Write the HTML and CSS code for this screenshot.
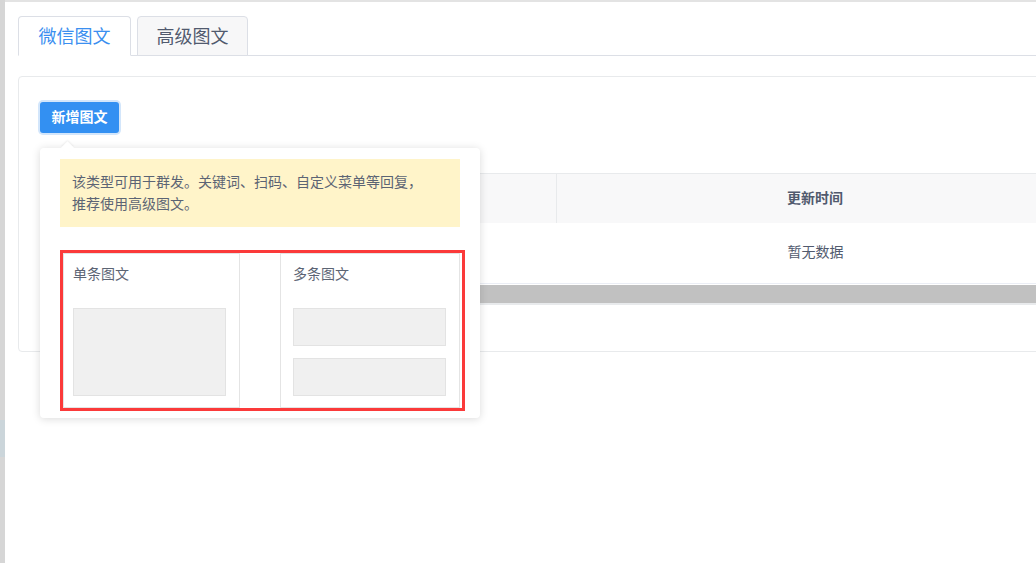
FILE: index.html
```html
<!DOCTYPE html>
<html lang="zh-CN">
<head>
<meta charset="utf-8">
<title>微信图文</title>
<link rel="stylesheet" href="styles.css">
</head>
<body>
<div class="strip"><div class="strip-mark"></div></div>
<div class="main">
  <div class="tabs">
    <div class="tab active">微信图文</div>
    <div class="tab">高级图文</div>
  </div>
  <div class="card">
    <div class="btn-wrap">
      <button class="btn">新增图文</button>
      <div class="popover">
        <div class="notice">该类型可用于群发。关键词、扫码、自定义菜单等回复，<br>推荐使用高级图文。</div>
        <div class="choices">
          <div class="choice single">
            <div class="choice-title">单条图文</div>
            <div class="ph ph-big"></div>
          </div>
          <div class="choice multi">
            <div class="choice-title">多条图文</div>
            <div class="ph ph-small"></div>
            <div class="ph ph-small"></div>
          </div>
        </div>
      </div>
    </div>
    <div class="table">
      <div class="thead">
        <div class="th"></div>
        <div class="th">更新时间</div>
        <div class="th"></div>
      </div>
      <div class="tbody">暂无数据</div>
      <div class="scrollbar"></div>
    </div>
  </div>
</div>
</body>
</html>
```
FILE: styles.css
```css
html, body {
  margin: 0;
  padding: 0;
  height: 563px;
  overflow: hidden;
  background: #fff;
}
body {
  display: flex;
  font-family: "Noto Sans CJK SC", "Noto Sans", sans-serif;
  font-size: 14px;
  color: #515a6e;
}
.strip {
  width: 5px;
  flex: none;
  background: #d6d6d6;
  height: 563px;
  padding-top: 420px;
  box-sizing: border-box;
}
.strip-mark {
  height: 37px;
  background: #cbd5da;
}
.main {
  flex: 1;
  min-width: 0;
  overflow: hidden;
  border-top: 2px solid #e3e3e3;
  padding: 14px 0 0 13px;
  box-sizing: border-box;
  height: 563px;
}
.tabs {
  display: flex;
  align-items: flex-end;
  border-bottom: 1px solid #dcdfe6;
  height: 39px;
}
.tab {
  box-sizing: border-box;
  height: 40px;
  margin-bottom: -1px;
  border: 1px solid #dcdfe6;
  border-radius: 4px 4px 0 0;
  background: #f7f7f8;
  color: #515a6e;
  font-size: 18px;
  line-height: 36px;
  text-align: center;
  width: 111px;
  margin-right: 6px;
}
.tab.active {
  width: 113px;
  background: #fff;
  border-bottom-color: #fff;
  color: #3b8ff0;
}
.card {
  width: 1600px;
  margin-top: 20px;
  border: 1px solid #e8eaec;
  border-radius: 4px;
  padding: 25px 21px 46px;
}
.btn-wrap {
  position: relative;
  width: 79px;
  height: 31px;
}
.btn {
  display: block;
  width: 79px;
  height: 31px;
  padding: 0 0 3px;
  border: none;
  border-radius: 3px;
  background: #3390f2;
  color: #fff;
  font-family: "Noto Sans CJK SC", "Noto Sans", sans-serif;
  font-size: 14px;
  font-weight: bold;
  box-shadow: 0 0 0 2px #d3e6fb;
}
.popover {
  position: absolute;
  left: 0;
  top: 46px;
  z-index: 5;
  width: 440px;
  height: 270px;
  box-sizing: border-box;
  padding: 11px 20px 7px;
  background: #fff;
  border-radius: 4px;
  box-shadow: 0 1px 8px rgba(0, 0, 0, 0.15);
}
.popover::before {
  content: "";
  position: absolute;
  left: 23px;
  top: -5px;
  width: 9px;
  height: 9px;
  background: #fff;
  transform: rotate(45deg);
  box-shadow: -1px -1px 2px rgba(0, 0, 0, 0.06);
}
.notice {
  position: relative;
  height: 68px;
  box-sizing: border-box;
  padding: 11px 12px 13px;
  background: #fff4c9;
  color: #5c6474;
  font-size: 14px;
  line-height: 22px;
}
.choices {
  margin-top: 23px;
  width: 405px;
  height: 161px;
  box-sizing: border-box;
  border: 3px solid #fb3a3a;
  display: flex;
  gap: 40px;
}
.choice {
  box-sizing: border-box;
  height: 155px;
  border: 1px solid #e4e4e4;
  padding-top: 9px;
  display: flex;
  flex-direction: column;
}
.single {
  width: 177px;
  padding-left: 9px;
}
.multi {
  width: 180px;
  padding-left: 12px;
}
.choice-title {
  height: 20px;
  line-height: 20px;
  font-size: 14px;
  color: #5c6474;
  margin-bottom: 25px;
}
.ph {
  width: 153px;
  box-sizing: border-box;
  background: #f0f0f0;
  border: 1px solid #e3e3e3;
}
.ph-big {
  height: 88px;
}
.ph-small {
  height: 38px;
}
.ph-small + .ph-small {
  margin-top: 12px;
}
.table {
  margin-top: 40px;
  width: 1551px;
  border-top: 1px solid #e8eaec;
}
.thead {
  display: flex;
  height: 49px;
  background: #f8f8f9;
}
.th {
  width: 517px;
  box-sizing: border-box;
  border-right: 1px solid #e8eaec;
  text-align: center;
  line-height: 47px;
  font-weight: bold;
  color: #515a6e;
}
.tbody {
  height: 61px;
  box-sizing: border-box;
  border-bottom: 1px solid #ebeef5;
  text-align: center;
  line-height: 57px;
  color: #515a6e;
}
.scrollbar {
  margin-top: 1px;
  height: 18px;
  background: #c1c1c1;
  border-bottom: 2px solid #e8eaec;
}
```
